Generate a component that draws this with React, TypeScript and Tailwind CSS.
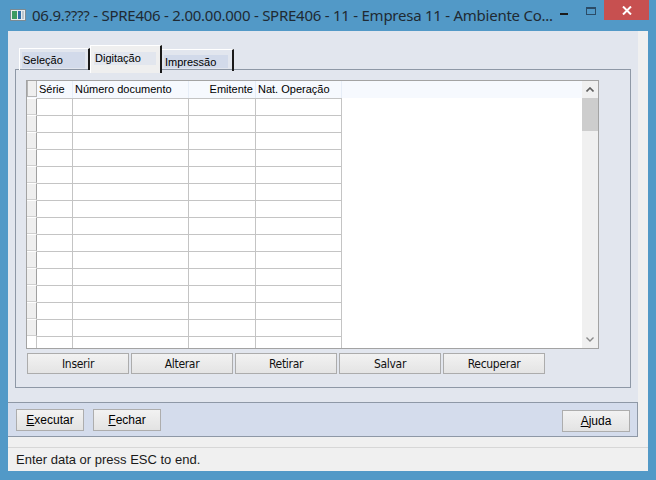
import React from "react";

// Column layout for the grid (widths in px, including the right divider)
const columns = [
  { title: "Série", width: 36, align: "left" },
  { title: "Número documento", width: 116, align: "left" },
  { title: "Emitente", width: 67, align: "right" },
  { title: "Nat. Operação", width: 86, align: "left" },
];

const rowCount = 15;

function TitleIcon() {
  return (
    <svg width="16" height="12" viewBox="0 0 16 12">
      <rect x="0.5" y="0.5" width="15" height="11" fill="#e8ecef" stroke="#7a8a93" />
      <rect x="2" y="2" width="5" height="8" fill="#3c9a62" />
      <rect x="8" y="2" width="3" height="8" fill="#2f6fa8" />
      <rect x="12" y="2" width="2" height="8" fill="#b9c6ce" />
    </svg>
  );
}

function ActionButton({ label }: { label: string }) {
  return (
    <button className="w-[102px] h-[21px] border border-[#acacac] bg-gradient-to-b from-[#f2f2f2] to-[#e4e4e4] text-[12px] text-[#111] [font-family:'DejaVu_Sans_Condensed','Liberation_Sans_Narrow',sans-serif] [font-stretch:condensed] tracking-[-0.3px]">
      {label}
    </button>
  );
}

function BarButton({ first, rest }: { first: string; rest: string }) {
  return (
    <button className="w-[68px] h-[22px] border border-[#adadad] bg-gradient-to-b from-[#f2f2f2] to-[#e3e3e3] text-[12px] text-black">
      <span className="underline">{first}</span>
      {rest}
    </button>
  );
}

export default function App() {
  return (
    <div className="w-[656px] h-[480px] bg-[#5299c7] flex flex-col [font-family:'Liberation_Sans',Arial,sans-serif] overflow-hidden">
      {/* Title bar */}
      <div className="h-[31px] flex items-start relative">
        <div className="mt-[9px] ml-[10px]">
          <TitleIcon />
        </div>
        <div className="ml-[6px] mt-[4px] text-[15px] text-[#1f2a33] whitespace-nowrap [font-family:'Noto_Sans','Open_Sans',sans-serif] tracking-[-0.25px]">
          06.9.???? - SPRE406 - 2.00.00.000 - SPRE406 - 11 - Empresa 11 - Ambiente Co...
        </div>
        <div className="ml-auto flex items-start">
          <div className="w-[8px] h-[2px] bg-[#1b1b1b] mt-[13px] mr-[18px]" />
          <div className="w-[10px] h-[8px] border border-[#2b4b66] border-t-2 mt-[7px] mr-[8px]" />
          <div className="w-[45px] h-[20px] bg-[#c75050] flex items-center justify-center mr-[7px]">
            <svg width="10" height="9" viewBox="0 0 10 9">
              <path d="M1 0.5 L9 8.5 M9 0.5 L1 8.5" stroke="#fff" strokeWidth="2" />
            </svg>
          </div>
        </div>
      </div>

      {/* Client area */}
      <div className="mx-[8px] mb-[9px] flex-1 flex flex-col bg-[#f0f0f0]">
        <div className="flex flex-1">
          <div className="w-[630px] flex flex-col">
            <div className="flex-1 bg-[#e2e6ee] pt-[14px] px-[7px] pb-[14px] flex flex-col">
              {/* Tabs */}
              <div className="flex items-end h-[28px] pl-[4px] relative z-10 -mb-[4px] text-[11px] text-black">
                <div className="w-[71px] h-[22px] mb-[3px] border-t border-l border-white border-r-2 border-r-[#1a1a1a] pt-[3px] pl-[2px]">
                  <div className="w-[63px] h-[16px] bg-[#d2daea] pl-[1px] leading-[17px]">Seleção</div>
                </div>
                <div className="w-[72px] h-[28px] bg-[#efefef] border-t border-l border-white border-r-2 border-r-[#1a1a1a] pt-[6px] pl-[3px]">
                  <div className="w-[62px] h-[13px] bg-[#e2e6ee] pl-[1px] leading-[12px]">Digitação</div>
                </div>
                <div className="w-[72px] h-[22px] mb-[2px] border-t border-white border-r-2 border-r-[#1a1a1a] pt-[5px] pl-[2px]">
                  <div className="w-[64px] h-[13px] bg-[#d2daea] pl-[1px] leading-[15px]">Impressão</div>
                </div>
              </div>

              {/* Tab panel */}
              <div className="flex-1 border border-[#8e98a6] pt-[10px] pl-[10px] flex flex-col">
                {/* Grid */}
                <div className="w-[573px] h-[269px] border border-[#a3a3a3] bg-white flex overflow-hidden">
                  <div className="flex-1 flex flex-col overflow-hidden">
                    {/* Header */}
                    <div className="h-[17px] flex shrink-0 bg-[#f6f9fe] text-[11px] text-black">
                      <div className="w-[10px] h-[16px] bg-[#efefef] border border-t-0 border-[#b5b5b5]" />
                      {columns.map((c) => (
                        <div
                          key={c.title}
                          style={{ width: c.width }}
                          className={`h-[17px] border-r border-[#e6edf7] px-[2px] leading-[17px] whitespace-nowrap ${
                            c.align === "right" ? "text-right" : "text-left"
                          }`}
                        >
                          {c.title}
                        </div>
                      ))}
                    </div>
                    {/* Rows */}
                    {Array.from({ length: rowCount }).map((_, i) => (
                      <div key={i} className="h-[17px] flex shrink-0">
                        {i < rowCount - 1 ? (
                          <div className="w-[10px] h-[17px] border-t border-white bg-[#efefef] border-r border-r-[#a0a0a0] border-b border-b-[#d0d0d0]" />
                        ) : (
                          <div className="w-[10px] h-[17px] border-r border-[#c4c4c4]" />
                        )}
                        {columns.map((c) => (
                          <div
                            key={c.title}
                            style={{ width: c.width }}
                            className="h-[17px] border-t border-r border-[#c4c4c4]"
                          />
                        ))}
                      </div>
                    ))}
                  </div>
                  {/* Scrollbar */}
                  <div className="w-[16px] bg-[#f0f0f0] flex flex-col">
                    <div className="h-[17px] flex items-center justify-center">
                      <svg width="8" height="5" viewBox="0 0 8 5">
                        <path d="M0.5 4.5 L4 1 L7.5 4.5" stroke="#606060" strokeWidth="1.6" fill="none" />
                      </svg>
                    </div>
                    <div className="h-[33px] bg-[#cdcdcd]" />
                    <div className="flex-1" />
                    <div className="h-[17px] flex items-center justify-center">
                      <svg width="8" height="5" viewBox="0 0 8 5">
                        <path d="M0.5 0.5 L4 4 L7.5 0.5" stroke="#8a8a8a" strokeWidth="1.4" fill="none" />
                      </svg>
                    </div>
                  </div>
                </div>

                {/* Action buttons */}
                <div className="flex gap-[2px] mt-[4px] ml-[1px]">
                  <ActionButton label="Inserir" />
                  <ActionButton label="Alterar" />
                  <ActionButton label="Retirar" />
                  <ActionButton label="Salvar" />
                  <ActionButton label="Recuperar" />
                </div>
              </div>
            </div>

            {/* Bottom button bar */}
            <div className="h-[35px] bg-[#d4dcec] border-t border-b border-r border-[#8e98a6] flex items-center pl-[8px] pr-[7px] gap-[9px]">
              <BarButton first="E" rest="xecutar" />
              <BarButton first="F" rest="echar" />
              <div className="ml-auto">
                <BarButton first="A" rest="juda" />
              </div>
            </div>
            <div className="h-[10px]" />
          </div>
          <div className="flex-1" />
        </div>

        {/* Status bar */}
        <div className="h-[24px] border-t border-[#d7d7d7] flex items-center pl-[8px] text-[13px] text-[#1a1a1a]">
          Enter data or press ESC to end.
        </div>
      </div>
    </div>
  );
}
